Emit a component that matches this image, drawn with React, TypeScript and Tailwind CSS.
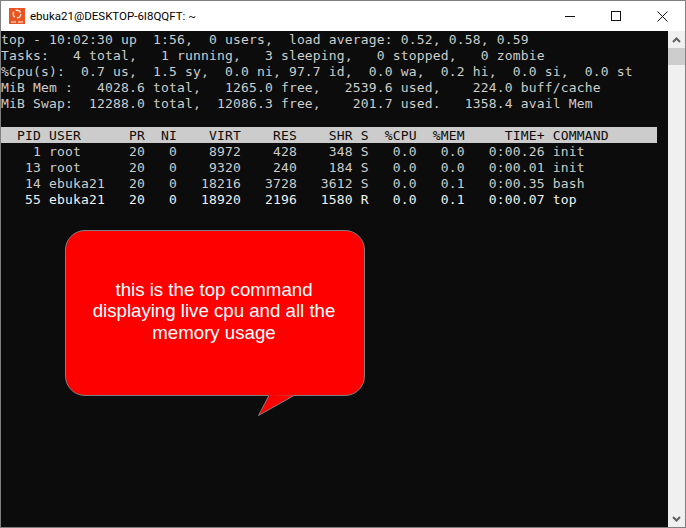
import React from 'react';

const summary = [
  'top - 10:02:30 up  1:56,  0 users,  load average: 0.52, 0.58, 0.59',
  'Tasks:   4 total,   1 running,   3 sleeping,   0 stopped,   0 zombie',
  '%Cpu(s):  0.7 us,  1.5 sy,  0.0 ni, 97.7 id,  0.0 wa,  0.2 hi,  0.0 si,  0.0 st',
  'MiB Mem :   4028.6 total,   1265.0 free,   2539.6 used,    224.0 buff/cache',
  'MiB Swap:  12288.0 total,  12086.3 free,    201.7 used.   1358.4 avail Mem',
];

const header = '  PID USER      PR  NI    VIRT    RES    SHR S  %CPU  %MEM     TIME+ COMMAND';

const processes = [
  '    1 root      20   0    8972    428    348 S   0.0   0.0   0:00.26 init',
  '   13 root      20   0    9320    240    184 S   0.0   0.0   0:00.01 init',
  '   14 ebuka21   20   0   18216   3728   3612 S   0.0   0.1   0:00.35 bash',
];

const running = '   55 ebuka21   20   0   18920   2196   1580 R   0.0   0.1   0:00.07 top';

const UbuntuIcon = () => (
  <svg width="16" height="16" viewBox="0 0 16 16" className="shrink-0">
    <rect width="16" height="16" fill="#e95420" />
    <circle cx="8" cy="6" r="3.8" fill="none" stroke="#fbe3da" strokeWidth="1.4" strokeDasharray="5.8 2.2" />
    <rect x="2" y="13" width="5" height="2" fill="#f2a78e" />
    <rect x="9" y="13" width="5" height="2" fill="#f2a78e" />
  </svg>
);

const WindowButtons = () => (
  <div className="flex items-center">
    <div className="flex h-[30px] w-[46px] items-center justify-center">
      <svg width="10" height="10" viewBox="0 0 10 10"><path d="M0 5.5H10" stroke="#111111" strokeWidth="1" /></svg>
    </div>
    <div className="flex h-[30px] w-[46px] items-center justify-center">
      <svg width="10" height="10" viewBox="0 0 10 10"><rect x="0.5" y="0.5" width="9" height="9" fill="none" stroke="#111111" strokeWidth="1" /></svg>
    </div>
    <div className="flex h-[30px] w-[46px] items-center justify-center">
      <svg width="11" height="11" viewBox="0 0 11 11"><path d="M0.5 0.5L10.5 10.5M10.5 0.5L0.5 10.5" stroke="#111111" strokeWidth="1" /></svg>
    </div>
  </div>
);

const Scrollbar = () => (
  <div className="flex w-[17px] shrink-0 flex-col items-center bg-[#f0f0f0]">
    <div className="flex h-[17px] w-full items-center justify-center">
      <svg width="9" height="6" viewBox="0 0 9 6"><path d="M1 5L4.5 1.5L8 5" fill="none" stroke="#606060" strokeWidth="2" /></svg>
    </div>
    <div className="h-[17px] w-full bg-[#cdcdcd]" />
    <div className="flex-1" />
    <div className="flex h-[17px] w-full items-center justify-center">
      <svg width="9" height="6" viewBox="0 0 9 6"><path d="M1 1L4.5 4.5L8 1" fill="none" stroke="#606060" strokeWidth="2" /></svg>
    </div>
  </div>
);

const Callout = () => (
  <div className="absolute left-[64px] top-[229px] flex h-[166px] w-[300px] items-center justify-center rounded-[20px] border border-[#808080] bg-[#ff0000] pb-[4px] pl-6 pr-[26px]">
    <p className="text-center font-['Liberation_Sans',Arial,sans-serif] text-[18.67px] leading-[21.5px] text-white">
      this is the top command displaying live cpu and all the memory usage
    </p>
    <svg width="64" height="24" viewBox="0 0 64 24" className="absolute left-[190px] top-[164px]">
      <path d="M13 0.5L2.5 20.5L38 0.5" fill="#ff0000" stroke="#808080" strokeWidth="1" />
      <path d="M12 0L36 0L13 1Z" fill="#ff0000" />
    </svg>
  </div>
);

export default function App() {
  return (
    <div className="relative flex h-[528px] w-[686px] flex-col overflow-hidden border border-[#7f7f7f] bg-white">
      <div className="flex h-[30px] shrink-0 items-center justify-between">
        <div className="flex items-center gap-[5px] pl-2">
          <UbuntuIcon />
          <span className="pt-[2px] font-['Roboto',sans-serif] text-[11.5px] text-black">ebuka21@DESKTOP-6I8QQFT: ~</span>
        </div>
        <WindowButtons />
      </div>
      <div className="flex min-h-0 flex-1">
        <div className="flex-1 whitespace-pre bg-[#0c0c0c] font-['DejaVu_Sans_Mono',monospace] text-[13px] leading-[18px] tracking-[0.17px] text-[#cccccc]">
          {summary.map(line => (
            <div key={line} className="h-4">{line}</div>
          ))}
          <div className="h-4" />
          <div className="h-4 w-[656px] bg-[#cccccc] text-[#0c0c0c]">{header}</div>
          {processes.map(line => (
            <div key={line} className="h-4">{line}</div>
          ))}
          <div className="h-4 text-[#f2f2f2]">{running}</div>
        </div>
        <Scrollbar />
      </div>
      <Callout />
    </div>
  );
}
